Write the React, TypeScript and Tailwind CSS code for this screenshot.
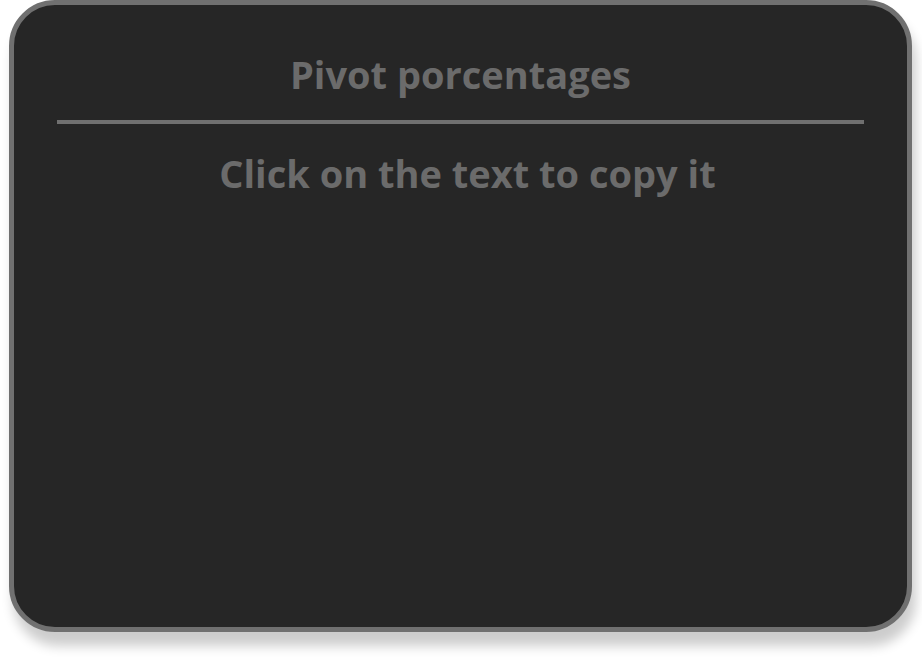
export default function App(): JSX.Element {
  return (
    <div className="min-h-screen bg-white pl-[9px] pr-[10px]" style={{ fontFamily: '"Open Sans", "Noto Sans", sans-serif' }}>
      <div className="flex h-[632px] w-[903px] flex-col items-center rounded-[46px] border-[5px] border-[#707070] bg-[#262626] px-[43px] shadow-[4px_14px_12px_rgba(0,0,0,0.2)]">
        <h1 className="mt-[41px] text-[38px] font-bold leading-[56px] text-[#6b6b6b]">Pivot porcentages</h1>
        <div className="mt-[18px] h-[4px] w-full bg-[#707070]" />
        <p className="mt-[21px] pl-[14px] text-[38px] font-bold leading-[56px] text-[#6b6b6b]">Click on the text to copy it</p>
      </div>
    </div>
  );
}
